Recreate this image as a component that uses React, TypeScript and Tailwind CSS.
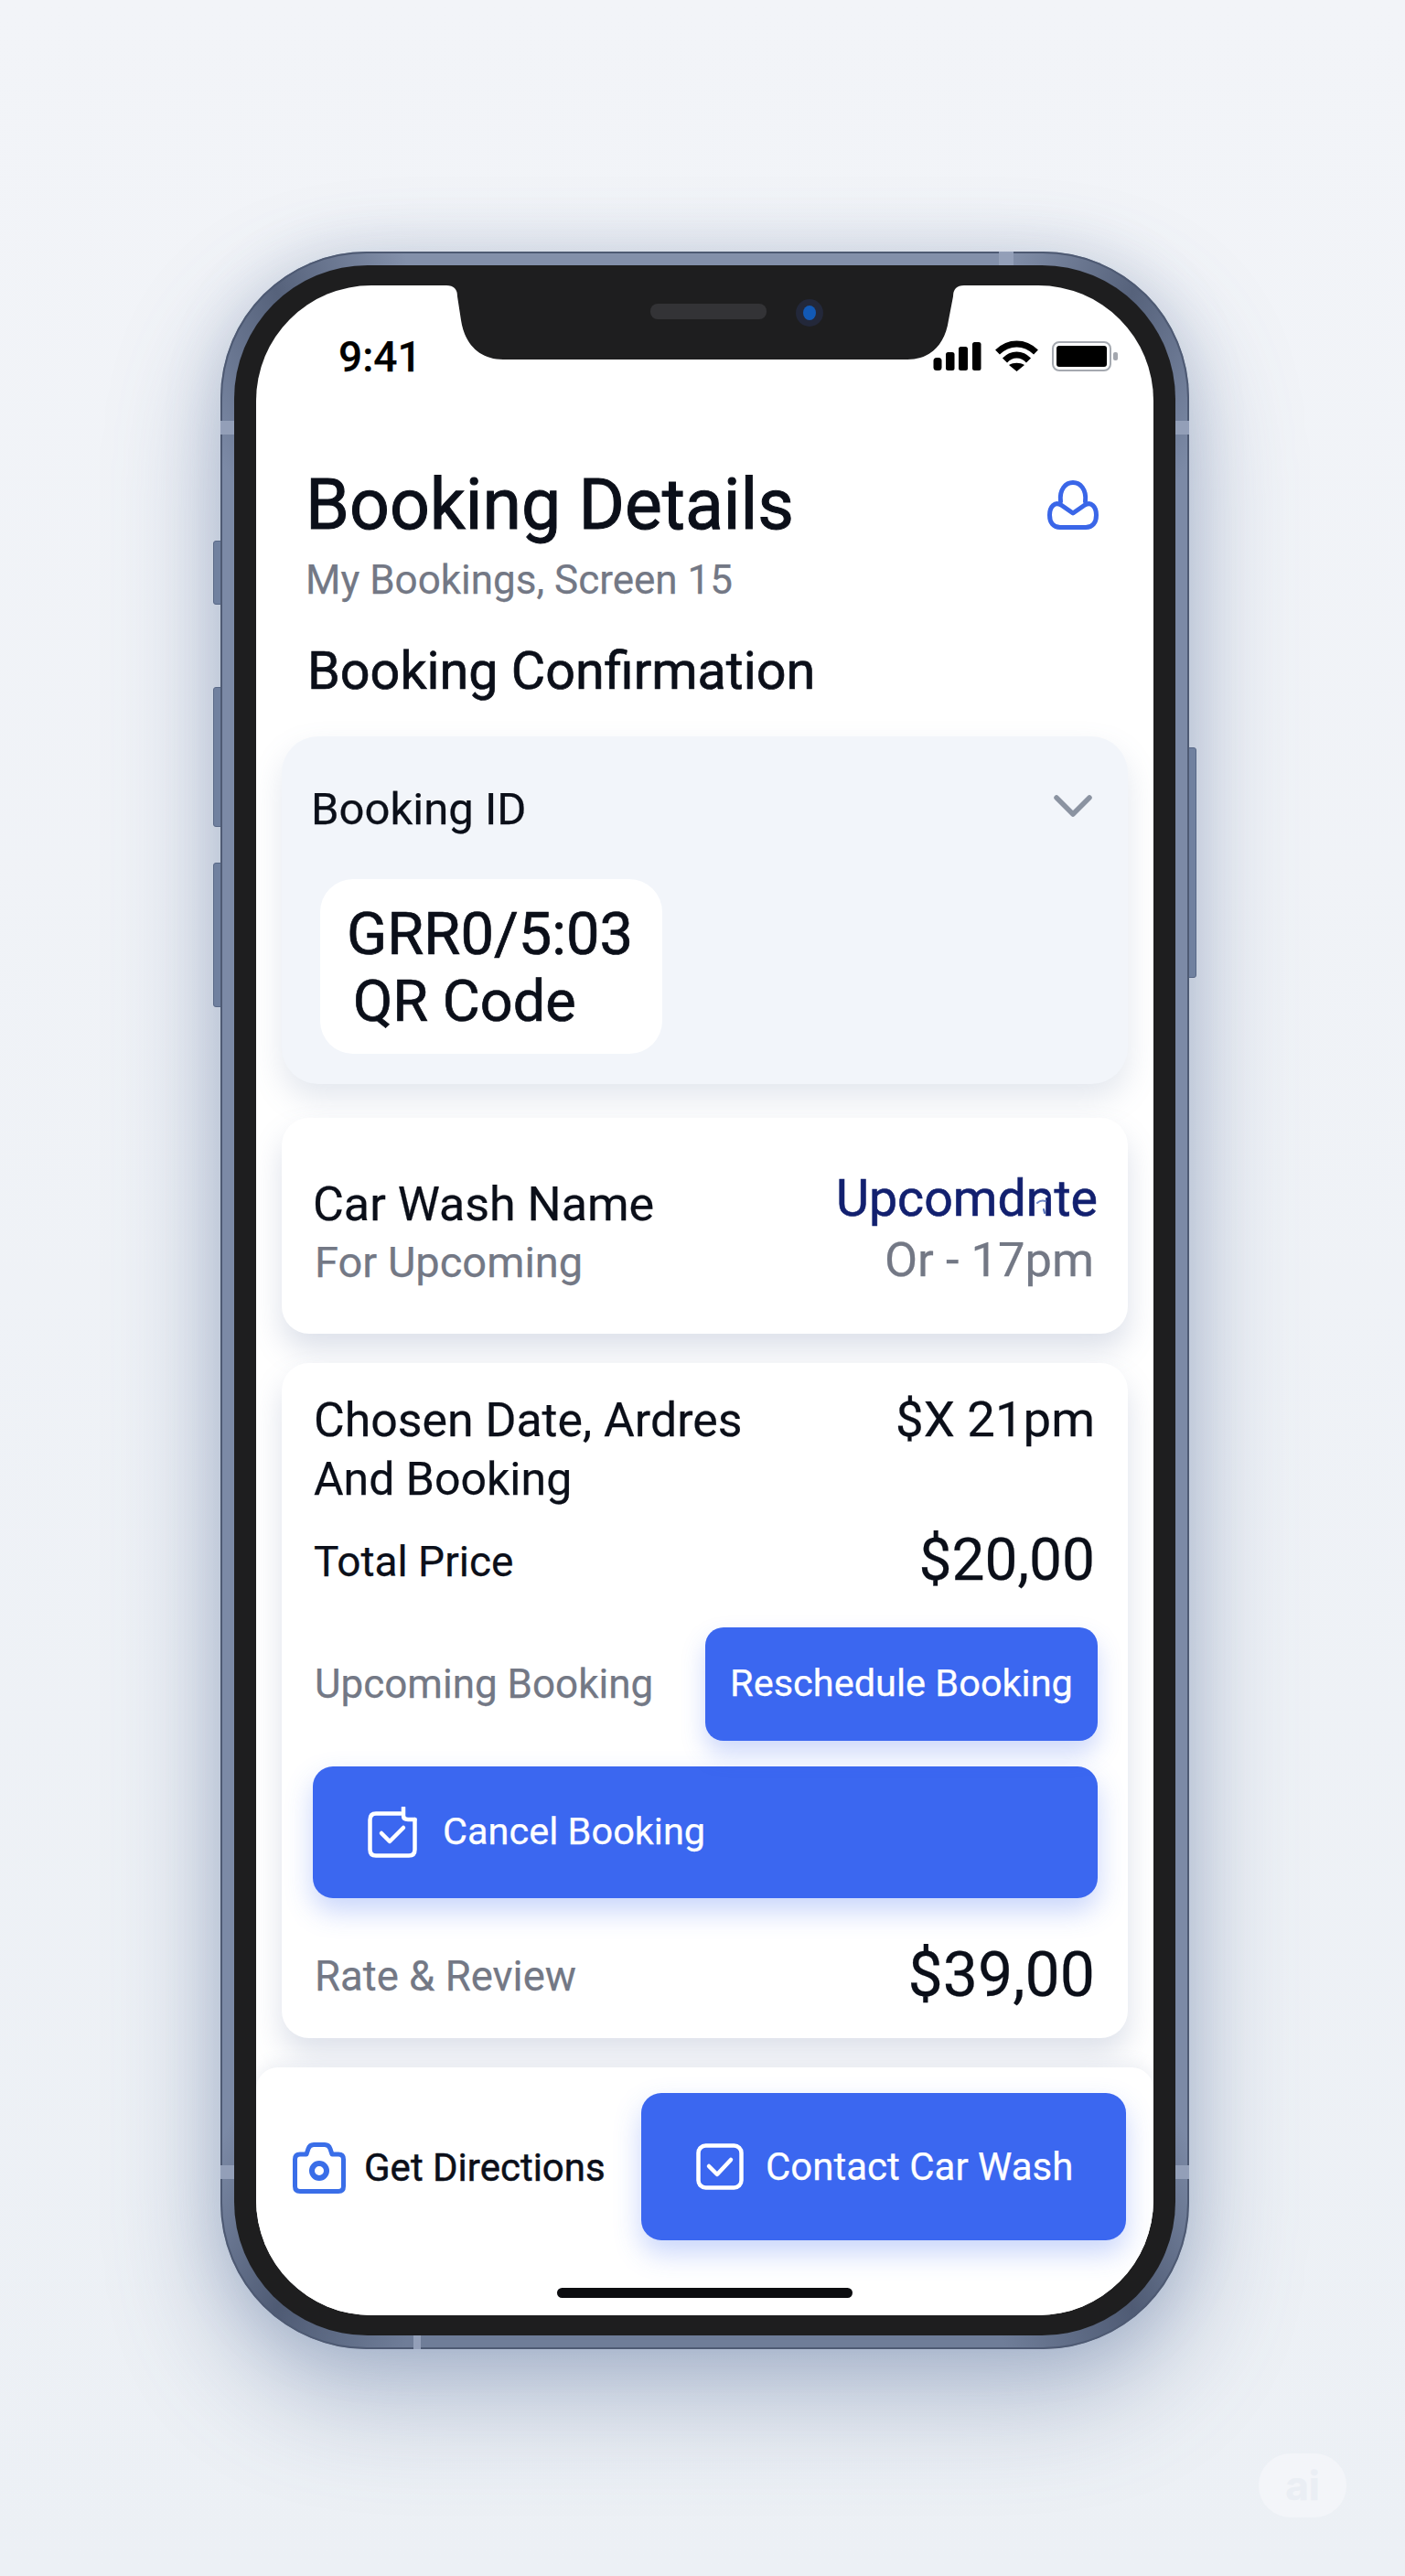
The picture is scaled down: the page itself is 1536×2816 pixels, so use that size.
import React from "react";

function HeaderIcon() {
  return (
    <svg width="56" height="54" viewBox="0 0 56 54" fill="none" stroke="#3a66e8" strokeWidth="5" strokeLinecap="round" strokeLinejoin="round">
      <path d="M14.500 23C13 10 20 2.500 28 2.500C36 2.500 43 10 41.500 23" />
      <path d="M28 36L15 27C8 23 2.500 29 2.500 38C2.500 47 7 51.500 14 51.500L42 51.500C49 51.500 53.500 47 53.500 38C53.500 29 48 23 41 27Z" />
    </svg>
  );
}

function Signal() {
  return (
    <svg width="53" height="31" viewBox="0 0 53 31" fill="#000">
      <rect x="0.500" y="17" width="9" height="14" rx="3.500" />
      <rect x="14" y="11" width="9.500" height="20" rx="2.500" />
      <rect x="28" y="5" width="10" height="26" rx="2.500" />
      <rect x="43" y="0" width="9.500" height="31" rx="2.500" />
    </svg>
  );
}

function Wifi() {
  return (
    <svg width="47" height="34" viewBox="0 0 47 34" fill="none" stroke="#000" strokeWidth="7">
      <path d="M2.500 13C15 1 32 1 44.500 13" />
      <path d="M10.500 22C18 14 29 14 36.500 22" />
      <path d="M15 27C20 24 27 24 32 27L23.500 34Z" fill="#000" stroke="none" />
    </svg>
  );
}

function Battery() {
  return (
    <div className="flex items-center gap-[2px]">
      <div className="w-[65px] h-[33px] rounded-[8px] border-2 border-[#a5a9b0] bg-white p-[3px]">
        <div className="w-full h-full rounded-[3px] bg-black" />
      </div>
      <div className="w-[5px] h-[9px] rounded-[2px] bg-[#a3a7ae]" />
    </div>
  );
}

function CalendarCheck() {
  return (
    <svg width="54" height="56" viewBox="0 0 54 56" fill="none" stroke="#fff" strokeWidth="4.500" strokeLinecap="round" strokeLinejoin="round">
      <path d="M36 7.500L9 7.500C4.500 7.500 2.500 10 2.500 14.500L2.500 47C2.500 51.500 4.500 53.500 9 53.500L45 53.500C49.500 53.500 51.500 51.500 51.500 47L51.500 14" />
      <path d="M39 1L39 10C39 13 41 14 44 14L51.500 14" />
      <path d="M15 29L24 38L39 23" />
    </svg>
  );
}

function SquareCheck() {
  return (
    <svg width="52" height="51" viewBox="0 0 52 51" fill="none" stroke="#fff" strokeWidth="4.500" strokeLinecap="round" strokeLinejoin="round">
      <rect x="2.500" y="2.500" width="47" height="46" rx="8" />
      <path d="M14 25L23 34L38 18" />
    </svg>
  );
}

function Camera() {
  return (
    <svg width="58" height="56" viewBox="0 0 58 56" fill="none" stroke="#3a6ee8" strokeWidth="5" strokeLinecap="round" strokeLinejoin="round">
      <path d="M8 13L15 13L17 7C18 4 20 2.500 23 2.500L35 2.500C38 2.500 40 4 41 7L43 13L50 13C53.500 13 55.500 15 55.500 18.500L55.500 48C55.500 51.500 53.500 53.500 50 53.500L8 53.500C4.500 53.500 2.500 51.500 2.500 48L2.500 18.500C2.500 15 4.500 13 8 13Z" />
      <circle cx="29" cy="31" r="8" strokeWidth="6" />
    </svg>
  );
}

function Chevron() {
  return (
    <svg width="42" height="24" viewBox="0 0 42 24" fill="none" stroke="#8b93a1" strokeWidth="5.500" strokeLinecap="round" strokeLinejoin="round">
      <path d="M3 3L21 21L39 3" />
    </svg>
  );
}

function Glitch() {
  return (
    <svg className="absolute right-[52px] top-[23px]" width="20" height="26" viewBox="0 0 20 26" fill="none" strokeLinecap="round">
      <path d="M4 9C8 4 12 3 16 6" stroke="#ffffff" strokeWidth="2.500" />
      <path d="M11 11L14 15L11 20" stroke="#ffffff" strokeWidth="2" />
      <path d="M6 13C9 10 12 10 15 11" stroke="#6f86c4" strokeWidth="2" />
      <path d="M13 20L14 24" stroke="#4f6db8" strokeWidth="2" />
    </svg>
  );
}

function Notch() {
  return (
    <svg className="absolute left-0 top-0" width="983" height="82" viewBox="0 0 983 82" fill="#1e1e1f">
      <path d="M208 0Q220 0 220 12L224 38C228 65 245 81 270 81L712 81C737 81 753 65 757 38L762 12Q762 0 774 0Z" />
      <rect x="431" y="20" width="127" height="17" rx="8" fill="#333336" />
      <ellipse cx="605" cy="30" rx="15" ry="15" fill="#23283a" />
      <ellipse cx="605" cy="30" rx="7" ry="8" fill="#1259b5" />
    </svg>
  );
}

export default function App() {
  return (
    <div className="relative w-[1536px] h-[2816px] overflow-hidden bg-[linear-gradient(180deg,#f2f4f8_0%,#ecf0f5_100%)] pt-[275px] pl-[241px] font-['Roboto',sans-serif] [-webkit-text-stroke-width:0.25px] text-[#0b0f19]">
      <div className="relative w-[1059px] h-[2293px]">
        <div className="absolute left-[-8px] top-[316px] w-[10px] h-[70px] rounded-l-[3px] bg-[#7a88a2] border border-[#5a6780]" />
        <div className="absolute left-[-8px] top-[476px] w-[10px] h-[153px] rounded-l-[3px] bg-[#7a88a2] border border-[#5a6780]" />
        <div className="absolute left-[-8px] top-[668px] w-[10px] h-[158px] rounded-l-[3px] bg-[#7a88a2] border border-[#5a6780]" />
        <div className="absolute right-[-8px] top-[542px] w-[10px] h-[252px] rounded-r-[3px] bg-[#7a88a2] border border-[#5a6780]" />

        <div className="relative w-full h-full rounded-[160px] bg-[conic-gradient(#8390aa_0deg,#8390aa_16deg,#56627b_23deg,#7c8aa6_30deg,#7c8aa6_150deg,#4f5b74_157deg,#6f7d98_164deg,#6f7d98_196deg,#4f5b74_203deg,#7c8aa6_210deg,#7c8aa6_330deg,#56627b_337deg,#8390aa_344deg,#8390aa_360deg)] p-[15px] shadow-[inset_0_0_0_2px_#4e5a73,0_50px_120px_rgba(80,105,150,0.42),0_0_60px_rgba(110,130,170,0.22)]">
          <div className="absolute left-0 top-[185px] w-[15px] h-[15px] bg-[#939fb8]" />
          <div className="absolute right-0 top-[185px] w-[15px] h-[15px] bg-[#939fb8]" />
          <div className="absolute left-0 top-[2092px] w-[15px] h-[15px] bg-[#939fb8]" />
          <div className="absolute right-0 top-[2092px] w-[15px] h-[15px] bg-[#939fb8]" />
          <div className="absolute left-[851px] top-0 w-[16px] h-[15px] bg-[#939fb8]" />
          <div className="absolute left-[211px] bottom-0 w-[8px] h-[15px] bg-[#939fb8]" />

          <div className="w-full h-full rounded-[146px] bg-[#1e1e1f] pt-[22px] pb-[22px] px-[24px]">
            <div className="relative flex flex-col w-full h-full rounded-[126px] bg-white overflow-hidden">
              <Notch />

              <div className="flex justify-between items-start h-[204px] pt-[60px] pl-[90px] pr-[39px]">
                <span className="text-[46px] leading-[36px] font-medium text-black">9:41</span>
                <div className="flex items-center gap-[15px]">
                  <Signal />
                  <Wifi />
                  <Battery />
                </div>
              </div>

              <div className="flex justify-between items-start pl-[54px] pr-[60px]">
                <h1 className="text-[77px] leading-[72px] font-normal [-webkit-text-stroke-width:1px]">Booking Details</h1>
                <div className="mt-[9px]"><HeaderIcon /></div>
              </div>
              <p className="mt-[22px] pl-[54px] text-[44px] leading-[48px] text-[#737885]">My Bookings, Screen 15</p>
              <h2 className="mt-[46px] pl-[56px] text-[57.5px] leading-[60px] font-normal [-webkit-text-stroke-width:0.7px]">Booking Confirmation</h2>

              <section className="relative mt-[41px] mx-[28px] h-[380px] rounded-[40px] bg-[#f2f5fa] shadow-[0_16px_34px_rgba(100,120,160,0.18)] pt-[52px]">
                <div className="flex justify-between items-start pl-[32px] pr-[39px]">
                  <span className="text-[49px] leading-[56px]">Booking ID</span>
                  <div className="mt-[12px]"><Chevron /></div>
                </div>
                <div className="mt-[48px] ml-[42px] w-[374px] h-[191px] rounded-[36px] bg-white pt-[24px] text-[65px] leading-[73px] [-webkit-text-stroke-width:0.7px]">
                  <div className="pl-[29px]">GRR0/5:03</div>
                  <div className="pl-[36px] text-[63px]">QR Code</div>
                </div>
              </section>

              <section className="relative mt-[37px] mx-[28px] h-[236px] rounded-[30px] bg-white shadow-[0_18px_32px_rgba(100,120,160,0.22)] flex justify-between items-start pt-[63px] pl-[34px] pr-[33px]">
                <div>
                  <div className="text-[52px] leading-[64px]">Car Wash Name</div>
                  <div className="-mt-[1px] pl-[2px] text-[47px] leading-[64px] text-[#737885]">For Upcoming</div>
                </div>
                <div className="relative text-right -mt-[6px]">
                  <div className="text-[55.5px] leading-[64px] text-[#12206f] [-webkit-text-stroke-width:0.6px]">Upcomdnte</div>
                  <Glitch />
                  <div className="pr-[4px] text-[52.5px] leading-[68px] text-[#737885]">Or - 17pm</div>
                </div>
              </section>

              <section className="relative mt-[32px] mx-[28px] h-[738px] rounded-[30px] bg-white shadow-[0_18px_32px_rgba(100,120,160,0.22)] pt-[31px] pl-[34px] pr-[33px]">
                <div className="flex justify-between items-start">
                  <div className="pl-[1px] leading-[64px]">
                    <div className="text-[51.8px]">Chosen Date, Ardres</div>
                    <div className="text-[50px]">And Booking</div>
                  </div>
                  <div className="-mt-[2px] pr-[3px] text-[54.5px] leading-[64px]">$X 21pm</div>
                </div>
                <div className="mt-[26px] flex justify-between items-center h-[64px] pl-[1px] pr-[3px]">
                  <span className="text-[46px] leading-[64px]">Total Price</span>
                  <span className="text-[64px] leading-[64px] -mt-[2px]">$20,00</span>
                </div>
                <div className="mt-[40px] flex justify-between items-center">
                  <span className="pl-[2px] text-[44px] leading-[64px] text-[#737885]">Upcoming Booking</span>
                  <button className="w-[429px] h-[124px] rounded-[20px] bg-[#3b67f0] text-white text-[41.500px] leading-[50px] pb-[2px] shadow-[0_14px_26px_rgba(59,103,240,0.25)]">Reschedule Booking</button>
                </div>
                <button className="mt-[28px] flex items-center w-full h-[144px] rounded-[22px] bg-[#3b67f0] pl-[60px] gap-[28px] text-white text-[41.500px] shadow-[0_14px_30px_rgba(59,103,240,0.28)]">
                  <CalendarCheck />
                  <span className="-mt-[2px]">Cancel Booking</span>
                </button>
                <div className="mt-[52px] flex justify-between items-center h-[64px] pl-[2px] pr-[3px]">
                  <span className="mt-[3px] text-[45.5px] leading-[64px] text-[#737885]">Rate &amp; Review</span>
                  <span className="text-[68px] leading-[64px] -mt-[1px]">$39,00</span>
                </div>
              </section>

              <footer className="relative mt-[32px] flex-1 rounded-t-[24px] bg-white pt-[28px] shadow-[0_-6px_16px_rgba(100,120,160,0.1)]">
                <div className="flex justify-between items-center pl-[40px] pr-[30px]">
                  <div className="flex items-center gap-[20px] mt-[2px]">
                    <Camera />
                    <span className="text-[42px] leading-[50px] [-webkit-text-stroke-width:0.5px]">Get Directions</span>
                  </div>
                  <button className="flex items-center w-[530px] h-[161px] rounded-[22px] bg-[#3b67f0] pl-[60px] gap-[24px] text-white text-[42px] shadow-[0_14px_30px_rgba(59,103,240,0.28)]">
                    <SquareCheck />
                    <span>Contact Car Wash</span>
                  </button>
                </div>
                <div className="mt-[52px] mx-auto w-[323px] h-[11px] rounded-full bg-[#0c0d10]" />
              </footer>
            </div>
          </div>
        </div>
      </div>

      <div className="absolute left-[1376px] top-[2682px] flex items-center justify-center w-[96px] h-[70px] rounded-full bg-[#f3f5f9] font-['Inter',sans-serif] font-bold text-[44px] text-[#eaeef4]">ai</div>
    </div>
  );
}
